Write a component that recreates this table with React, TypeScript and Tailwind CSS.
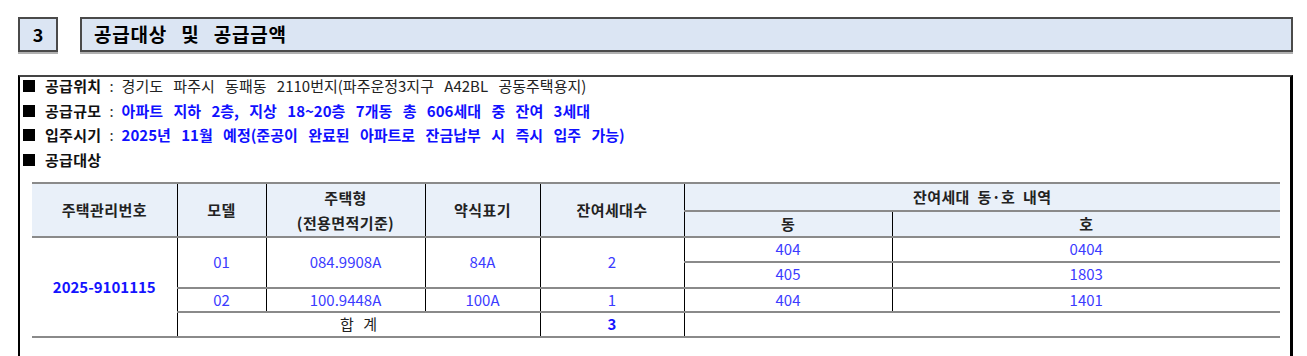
const FONT = { fontFamily: '"Noto Sans CJK KR", "Noto Sans", sans-serif' };

const hd = "border-x border-black border-y-2 border-y-[#8a8a8a] bg-[#e9f0f9] font-bold text-[#222] text-center tracking-[0.4px]";
const td = "border-x border-black border-y-2 border-y-[#8a8a8a] text-center text-[#3b3bff]";

function Bullet({ label, children, blue }: { label: string; children?: React.ReactNode; blue?: boolean }) {
  return (
    <div className="flex items-center h-[24.5px] whitespace-nowrap">
      <span className="w-[12px] h-[12px] bg-black ml-[3px] mr-[10px]" />
      <span className="font-bold text-[#111] tracking-[0.3px]">{label}</span>
      {children !== undefined && (
        <>
          <span className="ml-[8px] mr-[8px] text-[#333]">:</span>
          <span className={blue ? "font-bold text-[#1010ff] [word-spacing:7px]" : "text-[#222] [word-spacing:7px]"}>{children}</span>
        </>
      )}
    </div>
  );
}

export default function App() {
  return (
    <main className="min-h-screen bg-white pt-[17px] pl-[18px]" style={FONT}>
      {/* SECTION TITLE */}
      <div className="flex w-[1275px] gap-[22px]">
        <div className="w-[40px] h-[35px] flex items-center justify-center border-2 border-[#4a4a4a] bg-[#dbe5f3] shadow-[0_2px_0_#b0b0b0] text-[18px] font-bold">
          3
        </div>
        <div className="flex-1 h-[35px] flex items-center pl-[12px] border-2 border-[#4a4a4a] bg-[#dbe5f3] shadow-[0_2px_0_#b0b0b0] text-[19px] font-bold tracking-[0.8px] [word-spacing:9px]">
          공급대상 및 공급금액
        </div>
      </div>

      {/* BOX */}
      <div className="mt-[23px] w-[1275px] h-[300px] border-l-2 border-r-[3px] border-l-black border-r-black border-t-2 border-t-[#444] text-[15px]">
        <div className="-mt-[3px]">
          <Bullet label="공급위치">경기도 파주시 동패동 2110번지(파주운정3지구 A42BL 공동주택용지)</Bullet>
          <Bullet label="공급규모" blue>아파트 지하 2층, 지상 18~20층 7개동 총 606세대 중 잔여 3세대</Bullet>
          <Bullet label="입주시기" blue>2025년 11월 예정(준공이 완료된 아파트로 잔금납부 시 즉시 입주 가능)</Bullet>
          <Bullet label="공급대상" />
        </div>

        <table className="mt-[10px] ml-[12px] border-collapse table-fixed w-[1248px] text-[15px]">
          <colgroup>
            <col className="w-[145px]" />
            <col className="w-[89px]" />
            <col className="w-[159px]" />
            <col className="w-[115px]" />
            <col className="w-[144px]" />
            <col className="w-[208px]" />
            <col className="w-[388px]" />
          </colgroup>
          <thead>
            <tr className="h-[28px]">
              <th rowSpan={2} className={hd + " border-l-0"}>주택관리번호</th>
              <th rowSpan={2} className={hd}>모델</th>
              <th rowSpan={2} className={hd + " leading-[25px]"}>
                주택형<br />(전용면적기준)
              </th>
              <th rowSpan={2} className={hd}>약식표기</th>
              <th rowSpan={2} className={hd}>잔여세대수</th>
              <th colSpan={2} className={hd + " border-r-0 [word-spacing:4px]"}>잔여세대 동·호 내역</th>
            </tr>
            <tr className="h-[26px]">
              <th className={hd}>동</th>
              <th className={hd + " border-r-0"}>호</th>
            </tr>
          </thead>
          <tbody>
            <tr className="h-[23px]">
              <td rowSpan={4} className={td + " border-l-0 font-bold text-[#1414ff]"}>2025-9101115</td>
              <td rowSpan={2} className={td}>01</td>
              <td rowSpan={2} className={td}>084.9908A</td>
              <td rowSpan={2} className={td}>84A</td>
              <td rowSpan={2} className={td}>2</td>
              <td className={td}>404</td>
              <td className={td + " border-r-0"}>0404</td>
            </tr>
            <tr className="h-[26px]">
              <td className={td}>405</td>
              <td className={td + " border-r-0"}>1803</td>
            </tr>
            <tr className="h-[24px]">
              <td className={td}>02</td>
              <td className={td}>100.9448A</td>
              <td className={td}>100A</td>
              <td className={td}>1</td>
              <td className={td}>404</td>
              <td className={td + " border-r-0"}>1401</td>
            </tr>
            <tr className="h-[25px]">
              <td colSpan={3} className={td + " text-[#222] [word-spacing:6px]"}>합 계</td>
              <td className={td + " font-bold text-[#1414ff]"}>3</td>
              <td colSpan={2} className={td + " border-r-0"} />
            </tr>
          </tbody>
        </table>
      </div>
    </main>
  );
}
